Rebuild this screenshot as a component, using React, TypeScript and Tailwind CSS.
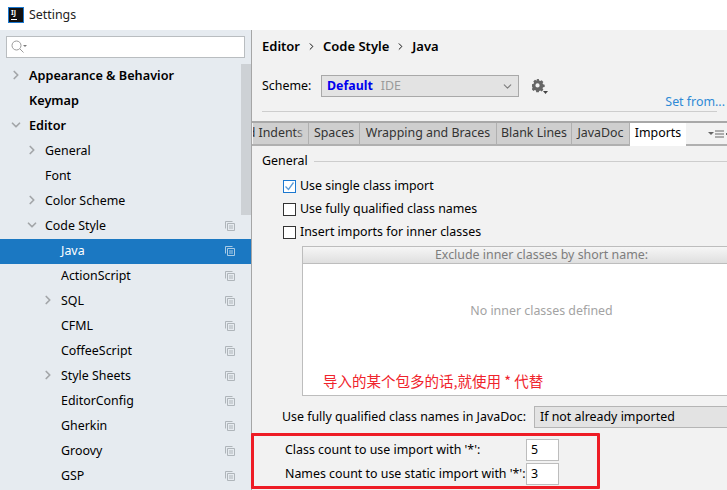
import { ChevronDown, ChevronRight } from "lucide-react";

type TreeRow = {
  label: string;
  indent: number;
  arrow?: "right" | "down";
  bold?: boolean;
  copy?: boolean;
  selected?: boolean;
};

const rows: TreeRow[] = [
  { label: "Appearance & Behavior", indent: 29, arrow: "right", bold: true },
  { label: "Keymap", indent: 29, bold: true },
  { label: "Editor", indent: 29, arrow: "down", bold: true },
  { label: "General", indent: 45, arrow: "right" },
  { label: "Font", indent: 45 },
  { label: "Color Scheme", indent: 45, arrow: "right" },
  { label: "Code Style", indent: 45, arrow: "down", copy: true },
  { label: "Java", indent: 61, copy: true, selected: true },
  { label: "ActionScript", indent: 61, copy: true },
  { label: "SQL", indent: 61, arrow: "right", copy: true },
  { label: "CFML", indent: 61, copy: true },
  { label: "CoffeeScript", indent: 61, copy: true },
  { label: "Style Sheets", indent: 61, arrow: "right", copy: true },
  { label: "EditorConfig", indent: 61, copy: true },
  { label: "Gherkin", indent: 61, copy: true },
  { label: "Groovy", indent: 61, copy: true },
  { label: "GSP", indent: 61, copy: true },
];

const tabs = [
  { label: "Spaces", width: "w-[51px]" },
  { label: "Wrapping and Braces", width: "w-[137px]" },
  { label: "Blank Lines", width: "w-[75px]" },
  { label: "JavaDoc", width: "w-[58px]" },
];

const CopyIcon = ({ light }: { light?: boolean }) => (
  <svg width="10" height="10" viewBox="0 0 10 10" fill="none" className={light ? "text-[#a9cbe6]" : "text-[#afb5ba]"}>
    <path d="M.5 7.5V.5h7" stroke="currentColor" />
    <path d="M2.5 2.5h7v7h-7z" stroke="currentColor" />
    <path d="M4 5h4M4 7h4" stroke="currentColor" />
  </svg>
);

const Row = ({ row }: { row: TreeRow }) => (
  <div
    className={`relative flex h-[25px] items-center ${
      row.selected ? "bg-[#1b78c2] text-white" : "text-black"
    } ${row.bold ? "pb-[2px] text-[12.7px] font-semibold" : ""}`}
    style={{ paddingLeft: row.indent }}
  >
    {row.arrow === "right" && (
      <ChevronRight size={14} strokeWidth={3} className="absolute top-[4px] text-[#a3a6a9]" style={{ left: row.indent - 20 }} />
    )}
    {row.arrow === "down" && (
      <ChevronDown size={14} strokeWidth={3} className="absolute top-[4px] text-[#a3a6a9]" style={{ left: row.indent - 20 }} />
    )}
    <span>{row.label}</span>
    {row.copy && (
      <span className="absolute left-[225px] top-[7px] flex">
        <CopyIcon light={row.selected} />
      </span>
    )}
  </div>
);

const Check = ({ label, checked }: { label: string; checked?: boolean }) => (
  <div className="flex h-[23px] items-center">
    <span className={`flex h-[13px] w-[13px] items-center justify-center border bg-white ${checked ? "border-[#1b78d0]" : "border-[#333333]"}`}>
      {checked && (
        <svg width="11" height="11" viewBox="0 0 11 11" fill="none">
          <path d="M1.5 5.5l3 3 5-7" stroke="#5a9bd8" strokeWidth="1.3" />
        </svg>
      )}
    </span>
    <span className="ml-[4px]">{label}</span>
  </div>
);

const CountRow = ({ label, value }: { label: string; value: string }) => (
  <div className="flex h-[24px] items-start">
    <span className="flex h-[22px] w-[241px] shrink-0 items-center whitespace-nowrap pt-[1px]">{label}</span>
    <span className="flex h-[22px] w-[33px] items-center border border-[#bdbdbd] bg-white pl-[4px]">{value}</span>
  </div>
);

export default function App() {
  return (
    <div className="relative h-[490px] w-[727px] overflow-hidden bg-white text-[12.4px] leading-none text-black [font-family:'Noto_Sans','Liberation_Sans',sans-serif]">
      {/* title bar */}
      <div className="flex h-[30px] items-center pl-[8px]">
        <div className="relative h-[16px] w-[16px] border border-[#1b78d0] bg-[#111111]">
          <span className="absolute left-[2px] top-[1px] text-[7px] font-bold text-white">IJ</span>
          <span className="absolute bottom-[2px] left-[2px] h-[1px] w-[6px] bg-white" />
        </div>
        <span className="ml-[5px] text-[#222222]">Settings</span>
      </div>

      <div className="flex h-[460px]">
        {/* sidebar */}
        <div className="relative h-full w-[252px] shrink-0 border-r border-[#a6a6a6] bg-[#e6ebf0]">
          <div className="mx-[6px] mt-[6px] flex h-[22px] w-[239px] items-center border border-[#b9bdc0] bg-white pl-[4px]">
            <svg width="16" height="14" viewBox="0 0 16 14" fill="none">
              <circle cx="5.5" cy="5.5" r="4.5" stroke="#9a9a9a" />
              <path d="M9 9l3.500 3.500" stroke="#9a9a9a" />
              <path d="M12 5h4l-2 2z" fill="#7a7a7a" />
            </svg>
          </div>
          <div className="absolute left-[241px] top-[34px] h-[151px] w-[10px] bg-[#cdd1d5]" />
          <div className="relative mt-[6px]">
            {rows.map((r) => (
              <Row key={r.label} row={r} />
            ))}
          </div>
        </div>

        {/* main panel */}
        <div className="min-w-0 flex-1 bg-[#f2f2f2]">
          <div className="flex h-[33px] items-center pl-[10px] text-[13px] font-semibold">
            <span>Editor</span>
            <ChevronRight size={11} className="mx-[6px]" strokeWidth={2} />
            <span>Code Style</span>
            <ChevronRight size={11} className="mx-[6px]" strokeWidth={2} />
            <span>Java</span>
          </div>
          <div className="mt-[12px] flex h-[22px] items-center pl-[10px]">
            <span className="w-[59px] pt-[1px]">Scheme:</span>
            <div className="relative flex h-[22px] w-[198px] items-center border border-[#a9a9a9] bg-[#e3e3e3] pt-[1px] pl-[5px]">
              <span className="font-bold text-[#0000ee]">Default</span>
              <span className="ml-[8px] text-[#9a9a9a]">IDE</span>
              <ChevronDown size={13} className="absolute right-[4px] top-[4px] text-[#7d7d7d]" />
            </div>
            <svg width="16" height="16" viewBox="0 0 16 16" className="ml-[13px] mt-[2px]">
              <path
                fillRule="evenodd"
                fill="#666666"
                d="M5 0h3l.4 1.800 1.300.6L11.400 1.400l2 2-1 1.600.6 1.300 1.900.4v2.600l-1.900.4-.6 1.300 1 1.600-2 2-1.700-1-1.300.6L8 15.500H5l-.4-1.900-1.300-.6-1.600 1-2-2 1-1.600-.6-1.300L0 8.700V6.100l1.900-.4.6-1.300-1-1.600 2-2 1.600 1 1.300-.6zM6.500 5a2.500 2.500 0 100 5 2.500 2.500 0 000-5z"
                transform="scale(.85)"
              />
              <path d="M11 12h5l-2.500 3z" fill="#444444" />
            </svg>
          </div>
          <div className="-mt-[2px] flex h-[15px] items-center justify-end pr-[2px] text-[#2f8ad6]">Set from...</div>
          <div className="mx-[10px] mt-[1px] h-[1px] bg-[#cdcdcd]" />

          {/* tabs */}
          <div className="mt-[9px] flex h-[25px] border-y-2 border-y-[#b0b0b0] border-t-[#a8a8a8] pl-[1px]">
            <div className="relative flex w-[56px] items-center justify-end overflow-hidden whitespace-nowrap border-r border-[#b0b0b0] bg-[#cfcfcf] pr-[5px] text-[#333333]">
              d Indents
              <span className="absolute right-0 top-0 h-full w-[14px] bg-gradient-to-r from-transparent to-[#cfcfcf]" />
            </div>
            {tabs.map((t) => (
              <div key={t.label} className={`flex ${t.width} items-center justify-center overflow-hidden whitespace-nowrap border-r border-[#b0b0b0] bg-[#cfcfcf] text-[#333333]`}>
                {t.label}
              </div>
            ))}
            <div className="-mb-[2px] flex h-[23px] w-[56px] items-center justify-center bg-white pb-[2px] text-black">Imports</div>
            <div className="flex flex-1 items-center justify-end">
              <svg width="22" height="10" viewBox="0 0 22 10">
                <path d="M3 3h6l-3 3z" fill="#666666" />
                <path d="M10 2h9M10 5h9M10 8h9" stroke="#666666" />
                <path d="M21 4h1v2h-1z" fill="#666666" />
              </svg>
            </div>
          </div>

          {/* imports tab */}
          <div className="pt-[7px]">
            <div className="ml-[10px] flex h-[16px] items-center">
              <span className="pt-[1px]">General</span>
              <span className="ml-[6px] h-[1px] flex-1 bg-[#cdcdcd]" />
            </div>
            <div className="ml-[31px] mt-[6px]">
              <Check label="Use single class import" checked />
              <Check label="Use fully qualified class names" />
              <Check label="Insert imports for inner classes" />
            </div>
            <div className="ml-[50px] mt-[2px] h-[150px] w-[478px] border-b border-l border-[#bdbdbd] bg-white">
              <div className="flex h-[18px] items-center justify-center border-y border-[#bdbdbd] bg-gradient-to-b from-[#f6f6f6] to-[#dfdfdf] text-[#7d7d7d]">
                Exclude inner classes by short name:
              </div>
              <div className="flex h-[94px] items-center justify-center text-[#a3a3a3]">No inner classes defined</div>
              <div className="pl-[20px] pt-[16px] text-[14.500px] text-[#f0242c] [font-family:'Noto_Sans_CJK_SC',sans-serif]">导入的某个包多的话,就使用 * 代替</div>
            </div>
            <div className="ml-[30px] mt-[10px] flex h-[22px] items-center">
              <span className="w-[252px] shrink-0 whitespace-nowrap pt-[1px]">Use fully qualified class names in JavaDoc:</span>
              <div className="flex h-[22px] flex-1 items-center border border-r-0 border-[#b5b5b5] bg-[#e3e3e3] pt-[1px] pl-[5px]">If not already imported</div>
            </div>
            <div className="ml-[33px] mt-[11px]">
              <CountRow label="Class count to use import with '*':" value="5" />
              <CountRow label="Names count to use static import with '*':" value="3" />
            </div>
          </div>
        </div>
      </div>

      {/* red annotation box */}
      <div className="absolute left-[251px] top-[433px] h-[56px] w-[349px] rounded-[1px] border-[3px] border-[#ee1c25]" />
    </div>
  );
}
